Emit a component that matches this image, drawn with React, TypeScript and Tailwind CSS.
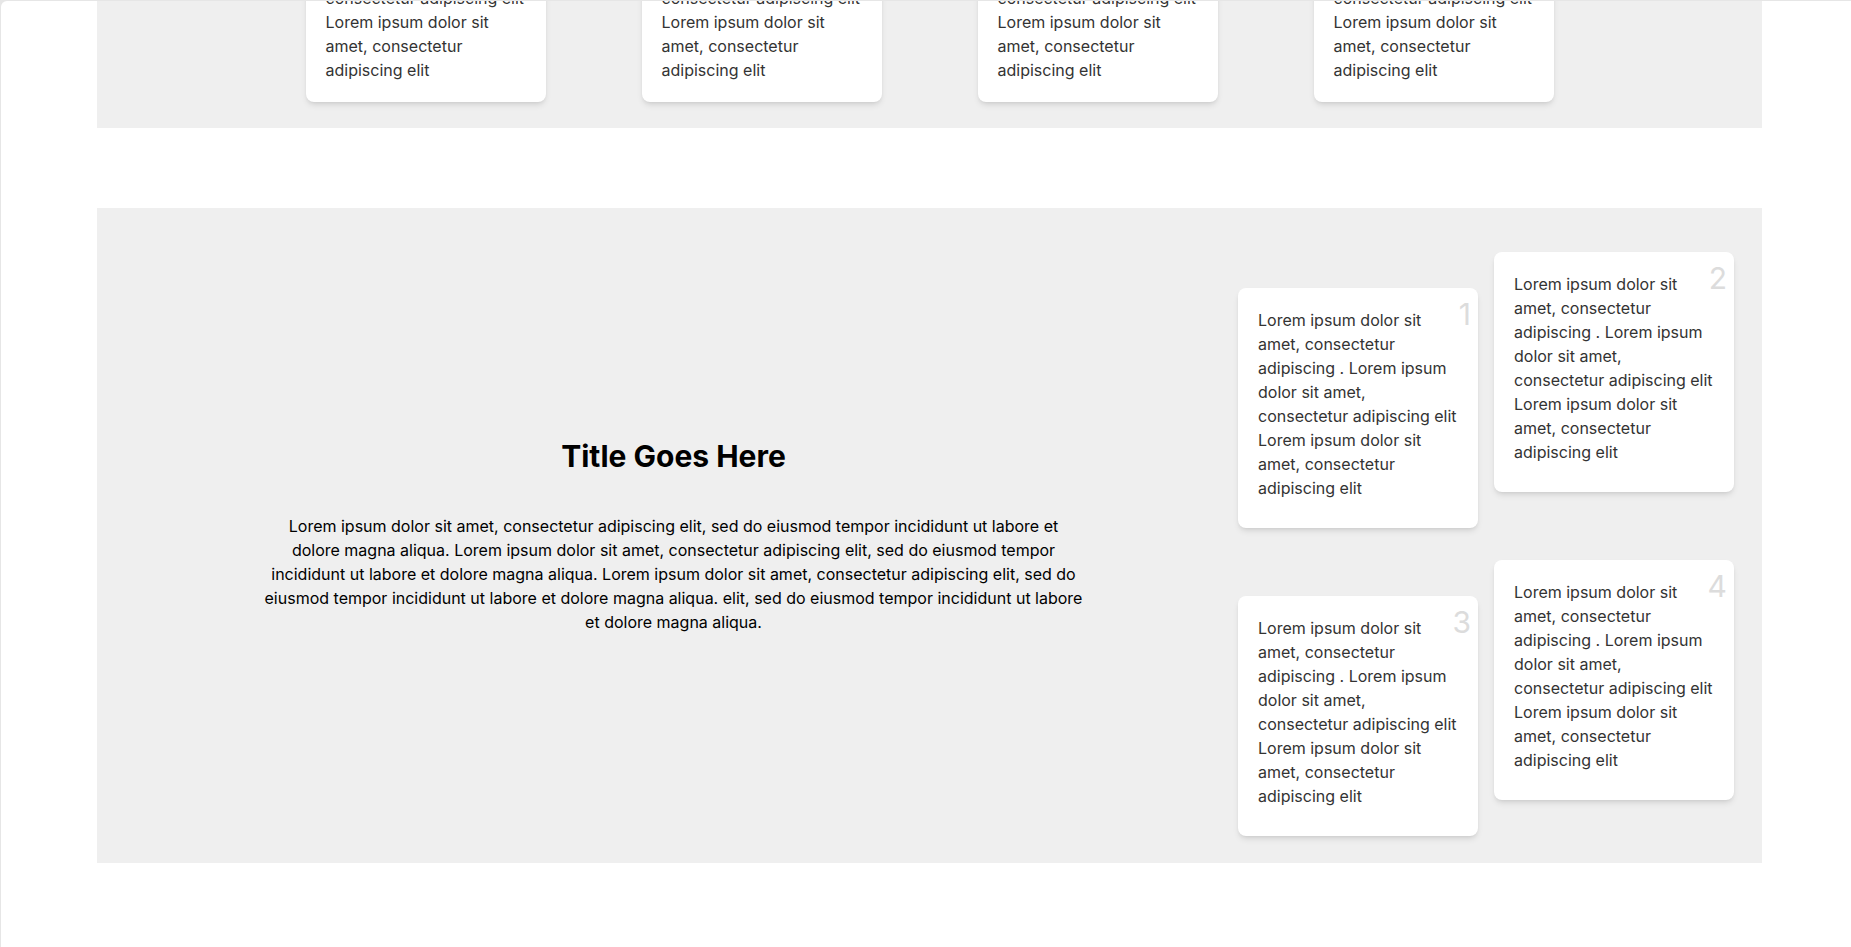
const cardText =
  'Lorem ipsum dolor sit amet, consectetur adipiscing . Lorem ipsum dolor sit amet, consectetur adipiscing elit Lorem ipsum dolor sit amet, consectetur adipiscing elit'

const intro =
  'Lorem ipsum dolor sit amet, consectetur adipiscing elit, sed do eiusmod tempor incididunt ut labore et dolore magna aliqua. Lorem ipsum dolor sit amet, consectetur adipiscing elit, sed do eiusmod tempor incididunt ut labore et dolore magna aliqua. Lorem ipsum dolor sit amet, consectetur adipiscing elit, sed do eiusmod tempor incididunt ut labore et dolore magna aliqua. elit, sed do eiusmod tempor incididunt ut labore et dolore magna aliqua.'

const Card = ({ n }: { n: number }) => (
  <div className="relative h-60 w-60 shrink-0 rounded-lg bg-white p-5 shadow-md">
    <span className="absolute right-[7px] top-2 text-3xl text-[#dcdcdc]">{n}</span>
    <p className="text-base leading-6 text-[#333]">{cardText}</p>
  </div>
)

const TopCard = () => (
  <div className="flex h-60 w-60 shrink-0 flex-col justify-end rounded-lg bg-white px-5 pb-5 shadow-md">
    <p className="text-base leading-6 text-[#333]">{cardText}</p>
  </div>
)

export default function App() {
  return (
    <div className="h-[947px] overflow-hidden bg-[#e6e6e6] pl-px pt-px font-['Inter',sans-serif]">
      <div className="h-full overflow-hidden rounded-tl-md bg-white">
        {/* previous block, scrolled mostly out of view */}
        <section className="-mt-[165px] ml-[96px] w-[1665px] bg-[#efefef] py-[26px]">
          <div className="flex justify-center gap-24">
            {[1, 2, 3, 4].map((i) => (
              <TopCard key={i} />
            ))}
          </div>
        </section>

        <section className="ml-[96px] mt-20 flex w-[1665px] gap-4 bg-[#efefef] px-7">
          <div className="flex flex-1 flex-col justify-center text-center">
            <h2 className="mb-10 text-3xl font-bold text-black">Title Goes Here</h2>
            <p className="mx-auto max-w-[820px] text-base leading-6 text-black">{intro}</p>
          </div>

          <div className="flex gap-4 pb-[27px] pt-11">
            <div className="flex flex-col gap-[68px] pt-9">
              <Card n={1} />
              <Card n={3} />
            </div>
            <div className="flex flex-col gap-[68px]">
              <Card n={2} />
              <Card n={4} />
            </div>
          </div>
        </section>
      </div>
    </div>
  )
}
